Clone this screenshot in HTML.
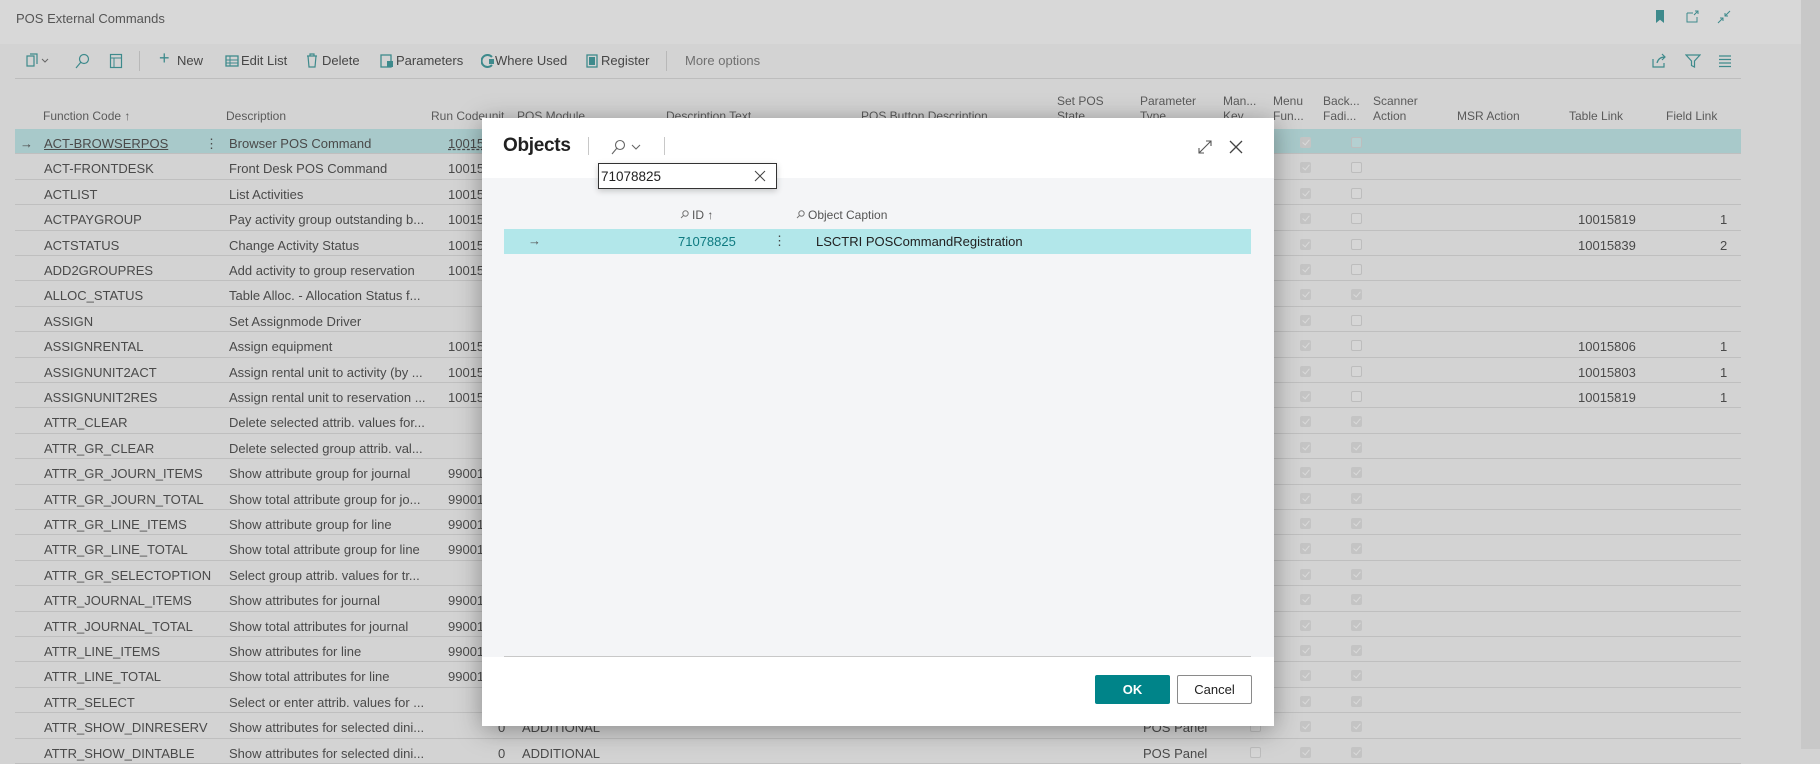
<!DOCTYPE html>
<html><head><meta charset="utf-8">
<style>
*{box-sizing:border-box;margin:0;padding:0}
body{width:1820px;height:749px;overflow:hidden;background:#d3d3d3;font-family:"Liberation Sans",Arial,sans-serif;color:#4a4a4a;position:relative;font-size:13px}
.abs{position:absolute;white-space:nowrap}
.top{position:absolute;left:0;top:0;width:1801px;height:44px;background:#d8d8d8}
.strip{position:absolute;left:1801px;top:0;width:19px;height:749px;background:#c8c8c8}
.tb{position:absolute;top:53px;font-size:13px;color:#464646}
.hd{position:absolute;font-size:12px;color:#5a5a5a;line-height:15px}
.row{position:absolute;left:15px;width:1726px;height:25.4px;border-bottom:1px solid #bfbfbf}
.row span{position:absolute;top:7px;white-space:nowrap}
.c1{left:29px}.c2{left:214px}.c3{left:433px}
.tl{left:1563px}.fl{left:1705px;width:7px;text-align:right}
.cb{position:absolute;top:8px;width:11px;height:11px;border:1px solid #bdbdbd;border-radius:2px;background:#d6d6d6}
.cb.k{background:#c4c4c4;border-color:#c4c4c4}
.cb.k:after{content:"";position:absolute;left:3px;top:0px;width:3px;height:6px;border-right:1.3px solid #dadada;border-bottom:1.3px solid #dadada;transform:rotate(40deg)}
.m{left:1285px}.b{left:1336px}.mk{left:1235px}
.sel{background:#a8c9ca}
.dlg{position:absolute;left:482px;top:118px;width:792px;height:608px;background:#fff;box-shadow:0 4px 24px rgba(0,0,0,.35)}
</style></head><body>
<div class="top"></div>
<div class="strip"></div>
<div class="abs" style="left:16px;top:11px;font-size:13px;color:#555">POS External Commands</div>
<div class="abs" style="left:1656px;top:10px;width:8px;height:13px;background:#3e8a8c;clip-path:polygon(0 0,100% 0,100% 100%,50% 75%,0 100%)"></div>
<svg class="abs" style="left:1685px;top:10px" width="14" height="14" viewBox="0 0 14 14"><path d="M2 3h6M2 3v9h10V7M10 1h3v3M13 1l-4 4" fill="none" stroke="#3e8a8c" stroke-width="1"/></svg>
<svg class="abs" style="left:1717px;top:10px" width="14" height="14" viewBox="0 0 14 14"><path d="M13 1L8 6M8 3v3h3M1 13l5-5M6 11V8H3" fill="none" stroke="#3e8a8c" stroke-width="1"/></svg>
<svg class="abs" style="left:24px;top:53px" width="28" height="16" viewBox="0 0 28 16"><path d="M3 3h7v10H3zM6 1h7v10" fill="none" stroke="#3e8a8c" stroke-width="1.2"/><path d="M18 6l3 3 3-3" fill="none" stroke="#666"/></svg>
<svg class="abs" style="left:74px;top:53px" width="16" height="16" viewBox="0 0 16 16"><circle cx="10" cy="6" r="4.5" fill="none" stroke="#3e8a8c" stroke-width="1.2"/><path d="M7 9l-5 6" stroke="#3e8a8c" stroke-width="1.2"/></svg>
<svg class="abs" style="left:109px;top:53px" width="14" height="16" viewBox="0 0 14 16"><rect x="1.5" y="1.5" width="11" height="13" fill="none" stroke="#3e8a8c" stroke-width="1.2"/><path d="M1.5 5h11M5 5v9" stroke="#3e8a8c"/></svg>
<div class="abs" style="left:139px;top:51px;width:1px;height:20px;background:#b8b8b8"></div>
<div class="tb" style="left:159px;font-size:18px;top:48px;color:#3e8a8c">+</div>
<div class="tb" style="left:177px">New</div>
<svg class="abs" style="left:225px;top:54px" width="14" height="14"><rect x="1" y="2" width="12" height="10" fill="none" stroke="#3e8a8c" stroke-width="1.3"/><path d="M1 6h12M1 9h12M5 2v10" stroke="#3e8a8c"/></svg>
<div class="tb" style="left:241px">Edit List</div>
<svg class="abs" style="left:306px;top:53px" width="12" height="15"><path d="M1 3h10M4 3V1h4v2M2 3l1 11h6l1-11" fill="none" stroke="#3e8a8c" stroke-width="1.2"/></svg>
<div class="tb" style="left:322px">Delete</div>
<svg class="abs" style="left:380px;top:54px" width="14" height="14"><rect x="1" y="1" width="10" height="12" fill="none" stroke="#3e8a8c" stroke-width="1.3"/><rect x="7" y="7" width="6" height="6" fill="#3e8a8c"/></svg>
<div class="tb" style="left:396px">Parameters</div>
<svg class="abs" style="left:481px;top:54px" width="14" height="14"><path d="M11 3A6 6 0 1 0 11 11" fill="none" stroke="#3e8a8c" stroke-width="2"/><rect x="8" y="5" width="5" height="5" fill="#3e8a8c"/></svg>
<div class="tb" style="left:495px">Where Used</div>
<svg class="abs" style="left:586px;top:54px" width="12" height="14"><rect x="1" y="1" width="10" height="12" fill="none" stroke="#3e8a8c" stroke-width="1.3"/><rect x="3" y="3" width="6" height="8" fill="#3e8a8c"/></svg>
<div class="tb" style="left:601px">Register</div>
<div class="abs" style="left:666px;top:51px;width:1px;height:20px;background:#b8b8b8"></div>
<div class="tb" style="left:685px;color:#707070">More options</div>
<svg class="abs" style="left:1651px;top:53px" width="16" height="16"><path d="M2 6v8h11V10M6 10c1-4 4-6 8-6M11 1l3 3-3 3" fill="none" stroke="#3e8a8c" stroke-width="1.2"/></svg>
<svg class="abs" style="left:1685px;top:53px" width="16" height="16"><path d="M1 2h14l-5.5 6v6l-3-1.5V8z" fill="none" stroke="#3e8a8c" stroke-width="1.2"/></svg>
<svg class="abs" style="left:1718px;top:54px" width="14" height="14"><path d="M1 2h12M1 5.5h12M1 9h12M1 12.5h12" stroke="#3e8a8c" stroke-width="1.2"/></svg>
<div class="abs" style="left:15px;top:78px;width:1726px;height:1px;background:#bdbdbd"></div>
<div class="hd" style="left:43px;top:109px">Function Code ↑</div>
<div class="hd" style="left:226px;top:109px">Description</div>
<div class="hd" style="left:431px;top:109px">Run Codeunit</div>
<div class="hd" style="left:517px;top:109px">POS Module</div>
<div class="hd" style="left:666px;top:109px">Description Text</div>
<div class="hd" style="left:861px;top:109px">POS Button Description</div>
<div class="hd" style="left:1057px;top:94px">Set POS<br>State</div>
<div class="hd" style="left:1140px;top:94px">Parameter<br>Type</div>
<div class="hd" style="left:1223px;top:94px">Man...<br>Key</div>
<div class="hd" style="left:1273px;top:94px">Menu<br>Fun...</div>
<div class="hd" style="left:1323px;top:94px">Back...<br>Fadi...</div>
<div class="hd" style="left:1373px;top:94px">Scanner<br>Action</div>
<div class="hd" style="left:1457px;top:109px">MSR Action</div>
<div class="hd" style="left:1569px;top:109px">Table Link</div>
<div class="hd" style="left:1666px;top:109px">Field Link</div>
<div class="row sel" style="top:129px"><span style="left:5px">→</span><span class="c1" style="text-decoration:underline">ACT-BROWSERPOS</span><span style="left:190px">⋮</span><span class="c2">Browser POS Command</span><span class="c3" style="text-decoration:underline dashed">10015</span><i class="cb k m"></i><i class="cb b" style="background:#b4d0d1"></i></div>
<div class="row" style="top:154.4px"><span class="c1">ACT-FRONTDESK</span><span class="c2">Front Desk POS Command</span><span class="c3">10015</span><i class="cb k m"></i><i class="cb b"></i></div>
<div class="row" style="top:179.8px"><span class="c1">ACTLIST</span><span class="c2">List Activities</span><span class="c3">10015</span><i class="cb k m"></i><i class="cb b"></i></div>
<div class="row" style="top:205.2px"><span class="c1">ACTPAYGROUP</span><span class="c2">Pay activity group outstanding b...</span><span class="c3">10015</span><i class="cb k m"></i><i class="cb b"></i><span class="tl">10015819</span><span class="fl">1</span></div>
<div class="row" style="top:230.6px"><span class="c1">ACTSTATUS</span><span class="c2">Change Activity Status</span><span class="c3">10015</span><i class="cb k m"></i><i class="cb b"></i><span class="tl">10015839</span><span class="fl">2</span></div>
<div class="row" style="top:256px"><span class="c1">ADD2GROUPRES</span><span class="c2">Add activity to group reservation</span><span class="c3">10015</span><i class="cb k m"></i><i class="cb b"></i></div>
<div class="row" style="top:281.4px"><span class="c1">ALLOC_STATUS</span><span class="c2">Table Alloc. - Allocation Status f...</span><i class="cb k m"></i><i class="cb k b"></i></div>
<div class="row" style="top:306.8px"><span class="c1">ASSIGN</span><span class="c2">Set Assignmode Driver</span><i class="cb k m"></i><i class="cb b"></i></div>
<div class="row" style="top:332.2px"><span class="c1">ASSIGNRENTAL</span><span class="c2">Assign equipment</span><span class="c3">10015</span><i class="cb k m"></i><i class="cb b"></i><span class="tl">10015806</span><span class="fl">1</span></div>
<div class="row" style="top:357.6px"><span class="c1">ASSIGNUNIT2ACT</span><span class="c2">Assign rental unit to activity (by ...</span><span class="c3">10015</span><i class="cb k m"></i><i class="cb b"></i><span class="tl">10015803</span><span class="fl">1</span></div>
<div class="row" style="top:383px"><span class="c1">ASSIGNUNIT2RES</span><span class="c2">Assign rental unit to reservation ...</span><span class="c3">10015</span><i class="cb k m"></i><i class="cb b"></i><span class="tl">10015819</span><span class="fl">1</span></div>
<div class="row" style="top:408.4px"><span class="c1">ATTR_CLEAR</span><span class="c2">Delete selected attrib. values for...</span><i class="cb k m"></i><i class="cb k b"></i></div>
<div class="row" style="top:433.8px"><span class="c1">ATTR_GR_CLEAR</span><span class="c2">Delete selected group attrib. val...</span><i class="cb k m"></i><i class="cb k b"></i></div>
<div class="row" style="top:459.2px"><span class="c1">ATTR_GR_JOURN_ITEMS</span><span class="c2">Show attribute group for journal</span><span class="c3">99001</span><i class="cb k m"></i><i class="cb k b"></i></div>
<div class="row" style="top:484.6px"><span class="c1">ATTR_GR_JOURN_TOTAL</span><span class="c2">Show total attribute group for jo...</span><span class="c3">99001</span><i class="cb k m"></i><i class="cb k b"></i></div>
<div class="row" style="top:510px"><span class="c1">ATTR_GR_LINE_ITEMS</span><span class="c2">Show attribute group for line</span><span class="c3">99001</span><i class="cb k m"></i><i class="cb k b"></i></div>
<div class="row" style="top:535.4px"><span class="c1">ATTR_GR_LINE_TOTAL</span><span class="c2">Show total attribute group for line</span><span class="c3">99001</span><i class="cb k m"></i><i class="cb k b"></i></div>
<div class="row" style="top:560.8px"><span class="c1">ATTR_GR_SELECTOPTION</span><span class="c2">Select group attrib. values for tr...</span><i class="cb k m"></i><i class="cb k b"></i></div>
<div class="row" style="top:586.2px"><span class="c1">ATTR_JOURNAL_ITEMS</span><span class="c2">Show attributes for journal</span><span class="c3">99001</span><i class="cb k m"></i><i class="cb k b"></i></div>
<div class="row" style="top:611.6px"><span class="c1">ATTR_JOURNAL_TOTAL</span><span class="c2">Show total attributes for journal</span><span class="c3">99001</span><i class="cb k m"></i><i class="cb k b"></i></div>
<div class="row" style="top:637px"><span class="c1">ATTR_LINE_ITEMS</span><span class="c2">Show attributes for line</span><span class="c3">99001</span><i class="cb k m"></i><i class="cb k b"></i></div>
<div class="row" style="top:662.4px"><span class="c1">ATTR_LINE_TOTAL</span><span class="c2">Show total attributes for line</span><span class="c3">99001</span><i class="cb k m"></i><i class="cb k b"></i></div>
<div class="row" style="top:687.8px"><span class="c1">ATTR_SELECT</span><span class="c2">Select or enter attrib. values for ...</span><i class="cb k m"></i><i class="cb k b"></i></div>
<div class="row" style="top:713.2px"><span class="c1">ATTR_SHOW_DINRESERV</span><span class="c2">Show attributes for selected dini...</span><span style="left:483px">0</span><span style="left:507px">ADDITIONAL</span><span style="left:1128px">POS Panel</span><i class="cb mk"></i><i class="cb k m"></i><i class="cb k b"></i></div>
<div class="row" style="top:738.6px"><span class="c1">ATTR_SHOW_DINTABLE</span><span class="c2">Show attributes for selected dini...</span><span style="left:483px">0</span><span style="left:507px">ADDITIONAL</span><span style="left:1128px">POS Panel</span><i class="cb mk"></i><i class="cb k m"></i><i class="cb k b"></i></div>

<div class="dlg">
  <div class="abs" style="left:0;top:60px;width:792px;height:479px;background:#f4f5f7"></div>
  <div class="abs" style="left:21px;top:17px;font-size:19px;color:#212121;font-weight:bold;letter-spacing:-0.3px">Objects</div>
  <div class="abs" style="left:106px;top:19px;width:1px;height:18px;background:#c8c8c8"></div>
  <svg class="abs" style="left:128px;top:21px" width="34" height="16"><circle cx="10" cy="6" r="4.5" fill="none" stroke="#666" stroke-width="1.1"/><path d="M7 9l-5 6M22 6l4 4 4-4" fill="none" stroke="#666" stroke-width="1.1"/></svg>
  <div class="abs" style="left:182px;top:19px;width:1px;height:18px;background:#c8c8c8"></div>
  <svg class="abs" style="left:715px;top:21px" width="16" height="16"><path d="M2 14L14 2M9 2h5v5M2 9v5h5" fill="none" stroke="#555" stroke-width="1.1"/></svg>
  <svg class="abs" style="left:746px;top:21px" width="16" height="16"><path d="M2 2l12 12M14 2L2 14" stroke="#444" stroke-width="1.3"/></svg>
  <div class="abs" style="left:116px;top:45px;width:179px;height:26px;background:#fff;border:1px solid #333;box-shadow:0 2px 6px rgba(0,0,0,.2)">
    <span class="abs" style="left:2px;top:5px;font-size:13.5px;color:#212121">71078825</span>
    <svg class="abs" style="left:155px;top:6px" width="12" height="12"><path d="M1 1l10 10M11 1L1 11" stroke="#444" stroke-width="1"/></svg>
  </div>
  <svg class="abs" style="left:198px;top:92px" width="9" height="9"><circle cx="5.5" cy="3.5" r="2.7" fill="none" stroke="#777"/><path d="M3.5 5.5L1 8" stroke="#777"/></svg>
  <div class="abs" style="left:210px;top:90px;font-size:12px;color:#555">ID ↑</div>
  <svg class="abs" style="left:314px;top:92px" width="9" height="9"><circle cx="5.5" cy="3.5" r="2.7" fill="none" stroke="#777"/><path d="M3.5 5.5L1 8" stroke="#777"/></svg>
  <div class="abs" style="left:326px;top:90px;font-size:12px;color:#555">Object Caption</div>
  <div class="abs" style="left:22px;top:111px;width:747px;height:25px;background:#b2e7ea">
    <span class="abs" style="left:24px;top:4px;color:#555">→</span>
    <span class="abs" style="left:174px;top:5px;color:#0e7a80">71078825</span>
    <span class="abs" style="left:269px;top:4px;color:#444">⋮</span>
    <span class="abs" style="left:312px;top:5px;color:#212121">LSCTRI POSCommandRegistration</span>
  </div>
  <div class="abs" style="left:22px;top:538px;width:747px;height:1px;background:#c8c8c8"></div>
  <div class="abs" style="left:613px;top:557px;width:75px;height:29px;background:#008489;border-radius:2px;color:#fff;font-weight:bold;text-align:center;line-height:29px;font-size:13px">OK</div>
  <div class="abs" style="left:695px;top:557px;width:75px;height:29px;background:#fff;border:1px solid #8a8a8a;border-radius:2px;color:#212121;text-align:center;line-height:27px;font-size:13px">Cancel</div>
</div>
</body></html>
